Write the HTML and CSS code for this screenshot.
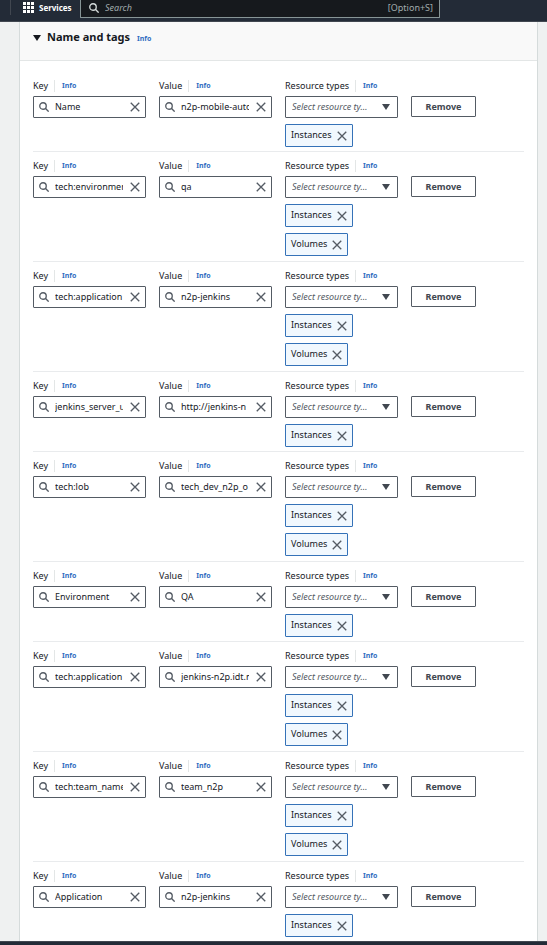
FILE: index.html
```
<!DOCTYPE html>
<html lang="en">
<head>
<meta charset="utf-8">
<title>Name and tags</title>
<link rel="stylesheet" href="styles.css">
</head>
<body>
<svg class="sprite" aria-hidden="true">
  <symbol id="search" viewBox="0 0 12 12"><circle cx="4.8" cy="4.8" r="3.9"/><path d="M7.6 7.6 11.6 11.6"/></symbol>
  <symbol id="close" viewBox="0 0 12 12"><path d="M.9 .9 11.1 11.1M11.1 .9 .9 11.1"/></symbol>
</svg>
<header class="topbar">
  <span class="divider"></span>
  <button class="services" type="button">
    <svg class="grid-icon" viewBox="0 0 11 11" aria-hidden="true"><path d="M0 0h3v3H0zM4 0h3v3H4zM8 0h3v3H8zM0 4h3v3H0zM4 4h3v3H4zM8 4h3v3H8zM0 8h3v3H0zM4 8h3v3H4zM8 8h3v3H8z"/></svg>
    Services
  </button>
  <label class="search">
    <svg class="icon" aria-hidden="true"><use href="#search"/></svg>
    <input type="text" placeholder="Search" aria-label="Search">
    <span>[Option+S]</span>
  </label>
</header>
<main class="page">
  <section class="panel">
    <h2 class="panel-header">
      <svg class="caret" viewBox="0 0 8 6" aria-hidden="true"><path d="M0 0h8L4 6z"/></svg>
      <span class="title">Name and tags <a class="info" href="#">Info</a></span>
    </h2>
    <div class="rows" id="rows"></div>
  </section>
</main>
<footer class="footer"></footer>
<script src="app.js"></script>
</body>
</html>
```
FILE: styles.css
```
* {
  box-sizing: border-box;
}

body {
  margin: 0;
  height: 100vh;
  display: flex;
  flex-direction: column;
  overflow: hidden;
  background: #eff1f1;
  color: #16191f;
  font: 9px/14px "Noto Sans", sans-serif;
}

button,
input,
select {
  font: inherit;
  color: inherit;
  margin: 0;
  padding: 0;
  border: 0;
  border-radius: 0;
  background: none;
  outline: 0;
}

svg {
  flex: none;
}

.sprite {
  position: absolute;
  width: 0;
  height: 0;
}

.icon {
  width: 10px;
  height: 10px;
  fill: none;
  stroke: #545b64;
  stroke-width: 1.6;
}

.topbar {
  flex: none;
  height: 22px;
  display: flex;
  align-items: flex-start;
  padding-left: 10px;
  background: #232b37;
  border-bottom: 1px solid #414750;
  color: #fff;
}

.divider {
  width: 1px;
  height: 15px;
  background: #414750;
}

.services {
  display: flex;
  align-items: center;
  gap: 5px;
  width: 69px;
  height: 15px;
  padding-left: 12px;
  font-size: 8px;
  font-weight: 700;
}

.grid-icon {
  width: 11px;
  height: 11px;
  fill: #fff;
}

.search {
  display: flex;
  align-items: center;
  gap: 6px;
  flex: 0 1 360px;
  height: 18px;
  padding: 0 6px 2px 8px;
  background: #16191d;
  border: 1px solid #879596;
  border-top: 0;
  border-radius: 0 0 1px 1px;
  color: #a1abac;
}

.search .icon {
  stroke: #d5dbdb;
}

.search input {
  flex: 1;
  min-width: 0;
}

.search input::placeholder {
  color: #a1abac;
  font-style: italic;
}

.page {
  flex: 1;
  min-height: 0;
  overflow: hidden;
  padding: 0 9px 0 19px;
}

.panel {
  background: #fff;
  border: 1px solid #d5dbdb;
  border-width: 0 1px;
}

.panel-header {
  display: flex;
  align-items: center;
  gap: 6px;
  height: 39px;
  margin: 0;
  padding: 0 13px 6px;
  background: #f9f9f9;
  border-bottom: 1px solid #e3e6e6;
  font-size: 11px;
}

.title .info {
  margin-left: 4px;
}

.caret {
  width: 8px;
  height: 6px;
  fill: #16191f;
}

.info {
  color: #2f6cc0;
  font-size: 7px;
  font-weight: 700;
  text-decoration: none;
}

.rows {
  padding: 11px 13px;
}

.tag-row {
  display: grid;
  grid-template-columns: repeat(4, minmax(0, 1fr));
  gap: 13px;
  min-height: 80px;
  padding: 7px 0 4px;
  border-bottom: 1px solid #e9ebed;
}

.tag-row.pair {
  min-height: 110px;
}

.tag-row:last-child {
  border-bottom: 0;
}

.caption {
  display: flex;
  align-items: center;
  height: 14px;
  margin-bottom: 3px;
}

.caption .info {
  margin-left: 6px;
  padding-left: 7px;
  height: 12px;
  line-height: 11px;
  border-left: 1px solid #e3e6e6;
}

.control {
  display: flex;
  align-items: center;
  height: 22px;
  padding: 0 5px;
  border: 1px solid #545b64;
  border-radius: 1px;
}

.control input {
  flex: 1;
  min-width: 0;
  margin: 0 7px 0 6px;
}

.clear {
  display: flex;
}

.select {
  display: grid;
  align-items: center;
  padding: 0;
}

.select select {
  grid-area: 1 / 1;
  width: 100%;
  height: 20px;
  padding-left: 6px;
  appearance: none;
  color: #545b64;
  font-style: italic;
}

.select .caret {
  grid-area: 1 / 1;
  justify-self: end;
  margin-right: 7px;
  fill: #414750;
  pointer-events: none;
}

.tokens {
  display: grid;
  justify-items: start;
  gap: 6px;
  margin: 6px 0 0;
  padding: 0;
  list-style: none;
}

.tokens li {
  display: flex;
  align-items: center;
  gap: 5px;
  height: 23px;
  padding: 0 5px;
  background: #f1f8fe;
  border: 1px solid #3572b8;
  border-radius: 1px;
}

.tokens span {
  padding-bottom: 2px;
}

.remove {
  justify-self: start;
  width: 65px;
  height: 21px;
  margin-top: 17px;
  border: 1px solid #545b64;
  border-radius: 1px;
  color: #414750;
  font-weight: 700;
}

.footer {
  flex: none;
  height: 4px;
  background: #232b37;
  border-top: 1px solid #414750;
}
```
FILE: app.js
```
const tags = [
  ["Name", "n2p-mobile-automation", ["Instances"]],
  ["tech:environment", "qa", ["Instances", "Volumes"]],
  ["tech:application", "n2p-jenkins", ["Instances", "Volumes"]],
  ["jenkins_server_url", "http://jenkins-n", ["Instances"]],
  ["tech:lob", "tech_dev_n2p_o", ["Instances", "Volumes"]],
  ["Environment", "QA", ["Instances"]],
  ["tech:application", "jenkins-n2p.idt.net", ["Instances", "Volumes"]],
  ["tech:team_name", "team_n2p", ["Instances", "Volumes"]],
  ["Application", "n2p-jenkins", ["Instances"]]
];

const icon = (name) => `<svg class="icon" aria-hidden="true"><use href="#${name}"/></svg>`;
const clear = (label) => `<button class="clear" type="button" aria-label="${label}">${icon("close")}</button>`;
const caption = (id, text) =>
  `<div class="caption"><label for="${id}">${text}</label><a class="info" href="#">Info</a></div>`;
const field = (id, text, value) => `
  <div>
    ${caption(id, text)}
    <div class="control">${icon("search")}<input type="text" id="${id}" value="${value}">${clear("Clear")}</div>
  </div>`;

document.getElementById("rows").innerHTML = tags.map(([key, value, types], i) => `
  <div class="tag-row${types.length > 1 ? " pair" : ""}">
    ${field(`key-${i}`, "Key", key)}
    ${field(`value-${i}`, "Value", value)}
    <div>
      ${caption(`types-${i}`, "Resource types")}
      <div class="control select">
        <select id="types-${i}"><option>Select resource ty…</option></select>
        <svg class="caret" viewBox="0 0 8 6" aria-hidden="true"><path d="M0 0h8L4 6z"/></svg>
      </div>
      <ul class="tokens">${types.map((t) => `<li><span>${t}</span>${clear(`Remove ${t}`)}</li>`).join("")}</ul>
    </div>
    <button class="remove" type="button">Remove</button>
  </div>`).join("");
```
